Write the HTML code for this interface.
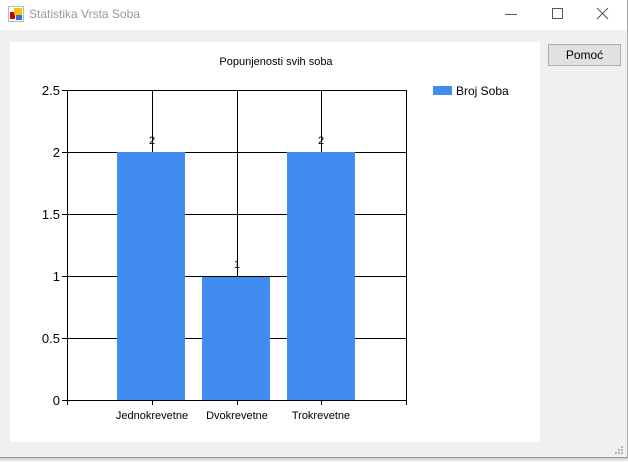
<!DOCTYPE html>
<html><head><meta charset="utf-8"><style>
html,body{margin:0;padding:0}
body{width:628px;height:462px;overflow:hidden;position:relative;background:#fff;font-family:"Liberation Sans",Arial,sans-serif}
#win{position:absolute;left:0;top:0;width:627px;height:457px;background:#f0f0f0;border-right:1px solid #aaa;border-bottom:1px solid #9a9a9a}
#tb{position:absolute;left:0;top:0;width:627px;height:30px;background:#fff}
#title{position:absolute;left:29px;top:7px;font-size:12px;color:#999}
#btn{position:absolute;left:548px;top:44px;width:71px;height:20px;border:1px solid #adadad;background:#e1e1e1;font-size:12px;text-align:center;line-height:20px;color:#000}
#shadow{position:absolute;left:0;top:458px;width:628px;height:4px;background:linear-gradient(#ccc,#fff)}
</style></head><body>
<div id="win">
<div id="tb">
<svg style="position:absolute;left:8px;top:6px" width="16" height="16">
<rect x="0.5" y="0.5" width="15" height="15" fill="#fff" stroke="#bbb"/>
<rect x="2" y="6" width="5" height="7" fill="#c00"/>
<rect x="6" y="2" width="8" height="7" fill="#f5c400"/>
<rect x="8" y="9" width="6" height="5" fill="#3a6fd8"/>
</svg>
<div id="title">Statistika Vrsta Soba</div>
<svg style="position:absolute;left:500px;top:0" width="127" height="30">
<line x1="5" y1="14.5" x2="17" y2="14.5" stroke="#555"/>
<rect x="52.5" y="8.5" width="10" height="10" fill="none" stroke="#555"/>
<path d="M97 8 L108 19 M108 8 L97 19" stroke="#555"/>
</svg>
</div>
<div id="btn">Pomoć</div>
<svg style="position:absolute;left:10px;top:42px" width="530" height="400">
<rect width="530" height="400" fill="#fff"/>
<text x="266" y="23" font-size="11" text-anchor="middle" font-family="Liberation Sans">Popunjenosti svih soba</text>
<g transform="translate(-10,-42)">
<g fill="#418cf0">
<rect x="117" y="152" width="68" height="248"/>
<rect x="202" y="276" width="68" height="124"/>
<rect x="287" y="152" width="68" height="248"/>
</g>
<g stroke="#000" stroke-width="1" shape-rendering="crispEdges">
<line x1="62" y1="90.5" x2="406" y2="90.5"/>
<line x1="62" y1="152.5" x2="117" y2="152.5"/><line x1="185" y1="152.5" x2="287" y2="152.5"/><line x1="355" y1="152.5" x2="406" y2="152.5"/>
<line x1="62" y1="214.5" x2="117" y2="214.5"/><line x1="185" y1="214.5" x2="202" y2="214.5"/><line x1="270" y1="214.5" x2="287" y2="214.5"/><line x1="355" y1="214.5" x2="406" y2="214.5"/>
<line x1="202" y1="214.5" x2="270" y2="214.5"/>
<line x1="62" y1="276.5" x2="117" y2="276.5"/><line x1="185" y1="276.5" x2="287" y2="276.5"/><line x1="355" y1="276.5" x2="406" y2="276.5"/>
<line x1="62" y1="338.5" x2="117" y2="338.5"/><line x1="185" y1="338.5" x2="202" y2="338.5"/><line x1="270" y1="338.5" x2="287" y2="338.5"/><line x1="355" y1="338.5" x2="406" y2="338.5"/>
<line x1="62" y1="400.5" x2="406" y2="400.5"/>
<line x1="67.5" y1="90" x2="67.5" y2="405"/>
<line x1="406.5" y1="90" x2="406.5" y2="405"/>
<line x1="152.5" y1="90" x2="152.5" y2="152"/><line x1="152.5" y1="400" x2="152.5" y2="405"/>
<line x1="237.5" y1="90" x2="237.5" y2="276"/><line x1="237.5" y1="400" x2="237.5" y2="405"/>
<line x1="321.5" y1="90" x2="321.5" y2="152"/><line x1="321.5" y1="400" x2="321.5" y2="405"/>
</g>
<g font-size="13" text-anchor="end" font-family="Liberation Sans">
<text x="60" y="95">2.5</text><text x="60" y="157">2</text><text x="60" y="219">1.5</text>
<text x="60" y="281">1</text><text x="60" y="343">0.5</text><text x="60" y="405">0</text>
</g>
<g font-size="11" text-anchor="middle" font-family="Liberation Sans">
<text x="152" y="144">2</text><text x="237" y="268">1</text><text x="321" y="144">2</text>
<text x="152" y="419">Jednokrevetne</text><text x="237" y="419">Dvokrevetne</text><text x="321" y="419">Trokrevetne</text>
</g>
<rect x="433" y="86" width="19" height="9" fill="#418cf0"/>
<text x="456" y="95" font-size="12" font-family="Liberation Sans">Broj Soba</text>
</g>
</svg>
<svg style="position:absolute;left:615px;top:446px" width="10" height="10" fill="#b5b5b5">
<rect x="6" y="0" width="2" height="2"/><rect x="3" y="3" width="2" height="2"/><rect x="6" y="3" width="2" height="2"/>
<rect x="0" y="6" width="2" height="2"/><rect x="3" y="6" width="2" height="2"/><rect x="6" y="6" width="2" height="2"/>
</svg>
</div>
<div id="shadow"></div>
</body></html>
